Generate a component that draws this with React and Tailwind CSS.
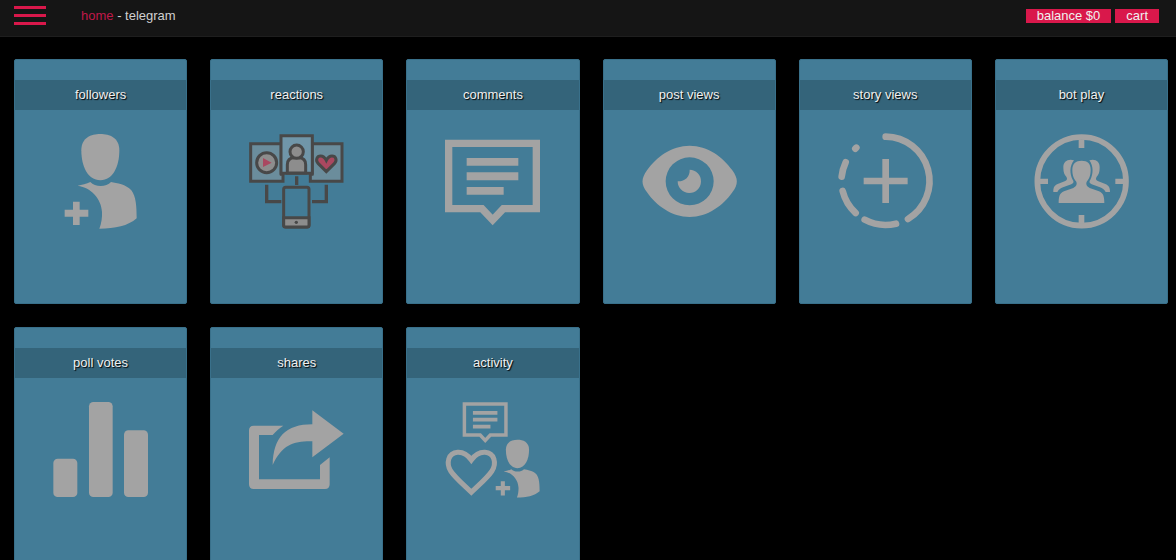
const FollowersShape = () => (
  <>
    <path d="M181 42C153 42 124 53 124 91C124 139 143 181 181 181C219 181 238 139 238 91C238 53 209 42 181 42Z" />
    <path d="M113 197C125 195 140 192 151 186C165 202 199 202 213 186C231 189 258 193 274 211C288 229 290 259 290 295C264 318 226 326 178 326C184 312 187 291 186 276C184 236 154 203 113 197Z" />
    <path d="M99 245H119V269H145V290H119V315H99V290H74V269H99Z" />
  </>
);

const CommentShape = () => (
  <>
    <path d="M51 70H314V266H215L183 300L151 266H51Z" fill="none" stroke="#a3a3a3" strokeWidth="22" />
    <path d="M105 114H260V137H105ZM105 157H260V181H105ZM105 201H216V224H105Z" />
  </>
);

const FollowersIcon = () => (
  <svg viewBox="39 42 285 285" className="size-[95px]" fill="#a3a3a3" aria-hidden="true">
    <FollowersShape />
  </svg>
);

const ReactionsIcon = () => (
  <svg
    viewBox="39 42 285 285"
    className="size-[95px]"
    fill="none"
    stroke="#484848"
    strokeWidth="9"
    aria-hidden="true"
  >
    <path d="M44 71H136V163H141V184H44ZM318 71H228V163H223V184H318Z" fill="#6b8d9c" />
    <path d="M135 47H229V160H135Z" fill="#7096a9" />
    <circle cx="92" cy="128" r="30" fill="#8d8d8d" />
    <path d="M81 114L107 128L81 141Z" fill="#aa4860" stroke="none" />
    <path
      d="M154 159V134C154 119 162 113 175 113H188C201 113 209 119 209 134V159Z"
      fill="#8d8d8d"
    />
    <circle cx="182" cy="95" r="20" fill="#8d8d8d" />
    <path
      d="M271 155L247 131C237 120 243 108 254 108C261 108 267 113 271 121C275 113 281 108 288 108C299 108 305 120 295 131Z"
      fill="#aa4860"
    />
    <path d="M182 169V195M92 194V245H136M271 194V245H228" strokeWidth="10" />
    <rect x="143" y="202" width="76" height="119" rx="6" />
    <path d="M143 293H219V315Q219 321 213 321H149Q143 321 143 315Z" fill="#8d8d8d" />
    <circle cx="181" cy="307" r="5" fill="#484848" stroke="none" />
  </svg>
);

const CommentsIcon = () => (
  <svg viewBox="40 42 285 285" className="size-[95px]" fill="#a3a3a3" aria-hidden="true">
    <CommentShape />
  </svg>
);

const PostViewsIcon = () => (
  <svg viewBox="35 42 285 285" className="size-[95px]" fill="#a3a3a3" aria-hidden="true">
    <path
      fillRule="evenodd"
      d="M178 77C232 77 278 111 306 151C324 177 324 192 306 217C278 257 232 291 178 291C124 291 78 257 50 217C32 192 32 177 50 151C78 111 124 77 178 77ZM178 112A72 72 0 1 0 178 256A72 72 0 1 0 178 112Z"
    />
    <path d="M178 149A35 35 0 1 1 142 184C163 185 179 171 178 149Z" />
  </svg>
);

const StoryViewsIcon = () => (
  <svg
    viewBox="35 42 285 285"
    className="size-[95px] overflow-visible"
    fill="none"
    stroke="#a3a3a3"
    strokeWidth="20"
    strokeLinecap="round"
    aria-hidden="true"
  >
    <path d="M178 50A133 133 0 0 1 245 297" />
    <path d="M209 311A133 133 0 0 1 115 299" />
    <path d="M88 279A133 133 0 0 1 49 213" />
    <path d="M46 170A133 133 0 0 1 58 127" />
    <path d="M87 86L90 83" />
    <path d="M178 117V249M112 183H244" strokeLinecap="butt" strokeWidth="20" />
  </svg>
);

const BotPlayIcon = () => (
  <svg viewBox="36 42 285 285" className="size-[95px]" fill="#a3a3a3" aria-hidden="true">
    <circle cx="179" cy="184" r="133" fill="none" stroke="#a3a3a3" strokeWidth="17" />
    <path d="M170 58H187V84H170ZM170 285H187V311H170ZM52 176H78V192H52ZM280 176H306V192H280Z" />
    <path d="M179 122C161 122 151 131 151 150C151 169 157 177 162 184C167 193 162 200 154 204L126 214C113 219 110 230 110 249H247C247 230 244 219 231 214L203 204C195 200 190 193 195 184C200 177 206 169 206 150C206 131 197 122 179 122Z" />
    <path d="M156 121C139 115 123 124 124 143C124 157 128 165 133 170C137 176 135 181 128 184L107 192C97 196 94 202 94 216H106C110 209 116 205 123 202L148 193C156 189 156 184 152 179C143 163 142 138 156 121Z" />
    <path d="M202 121C219 115 234 124 233 143C233 157 229 165 224 170C220 176 222 181 229 184L250 192C260 196 264 202 264 216H251C247 209 241 205 234 202L209 193C201 189 201 184 205 179C214 163 215 138 202 121Z" />
  </svg>
);

const PollVotesIcon = () => (
  <svg viewBox="39 36 285 285" className="size-[95px]" fill="#a3a3a3" aria-hidden="true">
    <rect x="40" y="206" width="72" height="115" rx="13" />
    <rect x="147" y="36" width="71" height="285" rx="13" />
    <rect x="252" y="121" width="72" height="200" rx="13" />
  </svg>
);

const SharesIcon = () => (
  <svg viewBox="39 36 285 285" className="size-[95px]" fill="#a3a3a3" aria-hidden="true">
    <path d="M53 107H142C130 114 119 124 110 135H69V268H252V225L281 202V283Q281 297 267 297H53Q39 297 39 283V121Q39 107 53 107Z" />
    <path d="M229 61L323 131L229 202V154C174 153 139 163 110 225C112 141 150 103 229 103Z" />
  </svg>
);

const ActivityIcon = () => (
  <svg viewBox="40 36 285 285" className="size-[95px] overflow-visible" fill="#a3a3a3" aria-hidden="true">
    <g transform="translate(74 9) scale(0.474)">
      <CommentShape />
    </g>
    <g transform="translate(147 124) scale(0.61)">
      <FollowersShape />
    </g>
    <path
      d="M119 307C98 286 72 265 57 243C43 220 49 189 78 187C95 186 109 196 119 210C129 196 143 186 160 187C189 189 195 220 181 243C166 265 140 286 119 307Z"
      fill="none"
      stroke="#a3a3a3"
      strokeWidth="15"
    />
  </svg>
);

const services = [
  { title: "followers", Icon: FollowersIcon },
  { title: "reactions", Icon: ReactionsIcon },
  { title: "comments", Icon: CommentsIcon },
  { title: "post views", Icon: PostViewsIcon },
  { title: "story views", Icon: StoryViewsIcon },
  { title: "bot play", Icon: BotPlayIcon },
  { title: "poll votes", Icon: PollVotesIcon },
  { title: "shares", Icon: SharesIcon },
  { title: "activity", Icon: ActivityIcon },
];

const Header = () => (
  <header className="flex items-start border-b border-[#1e1e1e] bg-[#151515] pt-1.5 pr-[17px] pb-2.5 pl-3.5">
    <button aria-label="menu" className="flex w-8 flex-col gap-[5px]">
      <span className="h-[3px] w-full bg-[#d9184b]" />
      <span className="h-[3px] w-full bg-[#d9184b]" />
      <span className="h-[3px] w-full bg-[#d9184b]" />
    </button>

    <nav className="ml-[35px] text-[#d0d0d0]">
      <a href="#home" className="text-[#c0184a]">
        home
      </a>{" "}
      - telegram
    </nav>

    <div className="mt-[3px] ml-auto flex gap-1 leading-[14px] text-[#f0f0f0]">
      <a href="#balance" className="bg-[#d9184b] px-[11px]">
        balance $0
      </a>
      <a href="#cart" className="bg-[#d9184b] px-[11px]">
        cart
      </a>
    </div>
  </header>
);

const ServiceCard = ({ title, Icon }) => (
  <a
    href={`#${title.replace(" ", "-")}`}
    className="flex flex-col items-center rounded-xs border border-[#39708a] bg-[#437c97] pt-5 pb-[74px]"
  >
    <h2 className="w-full bg-[#34647a] text-center leading-[30px] text-[#f0f0f0] [text-shadow:1px_1px_1px_#000]">
      {title}
    </h2>
    <div className="pt-6">
      <Icon />
    </div>
  </a>
);

const App = () => {
  return (
    <div className="min-h-screen bg-black font-['Liberation_Sans',Arial,sans-serif] text-[13px] leading-5">
      <Header />
      <main className="grid grid-cols-2 gap-[23px] pt-[22px] pr-2 pb-6 pl-3.5 sm:grid-cols-4 lg:grid-cols-6">
        {services.map((service) => (
          <ServiceCard key={service.title} {...service} />
        ))}
      </main>
    </div>
  );
};

export default App;
